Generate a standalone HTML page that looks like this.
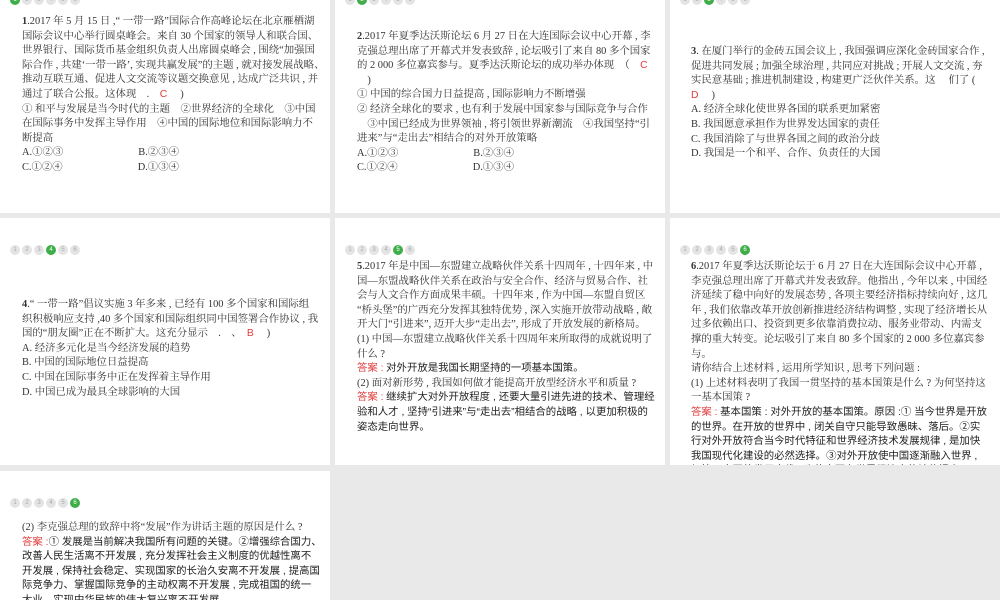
<!DOCTYPE html>
<html><head><meta charset="utf-8"><style>
*{margin:0;padding:0;box-sizing:border-box}
body{width:1000px;height:600px;background:#e9e9e9;position:relative;overflow:hidden;font-family:"Liberation Serif","Noto Serif CJK SC",serif;color:#333}
.p{position:absolute;background:#fff;overflow:hidden}
.t{position:absolute;font-size:10.4px;line-height:14.6px;white-space:nowrap;letter-spacing:0}
.dots{position:absolute;display:flex;gap:2px}
.dots span{width:10px;height:10px;border-radius:50%;background:#e4e4e4;color:#aaa;font:6px/10px "Liberation Sans",sans-serif;text-align:center}
.dots span.a{background:#3fae49;color:#fff}
.r{color:#e23b3b;font-family:"Liberation Sans","Noto Sans CJK SC",sans-serif}
.s{font-family:"Liberation Sans","Noto Sans CJK SC",sans-serif;color:#222}
b{font-weight:bold}
</style></head><body>

<div class="p" style="left:0;top:0;width:330px;height:213px">
<div class="dots" style="left:10px;top:-5px"><span class="a">1</span><span>2</span><span>3</span><span>4</span><span>5</span><span>6</span></div>
<div class="t" style="left:22px;top:15px"><b>1</b>.2017 年 5 月 15 日 ,“ 一带一路”国际合作高峰论坛在北京雁栖湖<br>国际会议中心举行圆桌峰会。来自 30 个国家的领导人和联合国、<br>世界银行、国际货币基金组织负责人出席圆桌峰会 , 围绕“加强国<br>际合作 , 共建‘一带一路’, 实现共赢发展”的主题 , 就对接发展战略、<br>推动互联互通、促进人文交流等议题交换意见 , 达成广泛共识 , 并<br>通过了联合公报。这体现　.　<span class="r">C</span>　 )<br>① 和平与发展是当今时代的主题　②世界经济的全球化　③中国<br>在国际事务中发挥主导作用　④中国的国际地位和国际影响力不<br>断提高<br>A.①②③<span style="display:inline-block;width:75px"></span>B.②③④<br>C.①②④<span style="display:inline-block;width:75px"></span>D.①③④</div>
</div>

<div class="p" style="left:335px;top:0;width:330px;height:213px">
<div class="dots" style="left:10px;top:-5px"><span>1</span><span class="a">2</span><span>3</span><span>4</span><span>5</span><span>6</span></div>
<div class="t" style="left:22px;top:30px"><b>2</b>.2017 年夏季达沃斯论坛 6 月 27 日在大连国际会议中心开幕 , 李<br>克强总理出席了开幕式并发表致辞 , 论坛吸引了来自 80 多个国家<br>的 2 000 多位嘉宾参与。夏季达沃斯论坛的成功举办体现　（　<span class="r">C</span><br>　)<br>① 中国的综合国力日益提高 , 国际影响力不断增强<br>② 经济全球化的要求 , 也有利于发展中国家参与国际竞争与合作<br>　③中国已经成为世界领袖 , 将引领世界新潮流　④我国坚持“引<br>进来”与“走出去”相结合的对外开放策略<br>A.①②③<span style="display:inline-block;width:75px"></span>B.②③④<br>C.①②④<span style="display:inline-block;width:75px"></span>D.①③④</div>
</div>

<div class="p" style="left:670px;top:0;width:330px;height:213px">
<div class="dots" style="left:10px;top:-5px"><span>1</span><span>2</span><span class="a">3</span><span>4</span><span>5</span><span>6</span></div>
<div class="t" style="left:21px;top:45px"><b>3</b>. 在厦门举行的金砖五国会议上 , 我国强调应深化金砖国家合作 ,<br>促进共同发展 ; 加强全球治理 , 共同应对挑战 ; 开展人文交流 , 夯<br>实民意基础 ; 推进机制建设 , 构建更广泛伙伴关系。这　 们了 (<br><span class="r">D</span>　 )<br>A. 经济全球化使世界各国的联系更加紧密<br>B. 我国愿意承担作为世界发达国家的责任<br>C. 我国消除了与世界各国之间的政治分歧<br>D. 我国是一个和平、合作、负责任的大国</div>
</div>

<div class="p" style="left:0;top:218px;width:330px;height:247px">
<div class="dots" style="left:10px;top:27px"><span>1</span><span>2</span><span>3</span><span class="a">4</span><span>5</span><span>6</span></div>
<div class="t" style="left:22px;top:80px"><b>4</b>.“ 一带一路”倡议实施 3 年多来 , 已经有 100 多个国家和国际组<br>织积极响应支持 ,40 多个国家和国际组织同中国签署合作协议 , 我<br>国的“朋友圈”正在不断扩大。这充分显示　.　、　<span class="r">B</span>　 )<br>A. 经济多元化是当今经济发展的趋势<br>B. 中国的国际地位日益提高<br>C. 中国在国际事务中正在发挥着主导作用<br>D. 中国已成为最具全球影响的大国</div>
</div>

<div class="p" style="left:335px;top:218px;width:330px;height:247px">
<div class="dots" style="left:10px;top:27px"><span>1</span><span>2</span><span>3</span><span>4</span><span class="a">5</span><span>6</span></div>
<div class="t" style="left:22px;top:42px"><b>5</b>.2017 年是中国—东盟建立战略伙伴关系十四周年 , 十四年来 , 中<br>国—东盟战略伙伴关系在政治与安全合作、经济与贸易合作、社<br>会与人文合作方面成果丰硕。十四年来 , 作为中国—东盟自贸区<br>“桥头堡”的广西充分发挥其独特优势 , 深入实施开放带动战略 , 敞<br>开大门“引进来”, 迈开大步“走出去”, 形成了开放发展的新格局。<br>(1) 中国—东盟建立战略伙伴关系十四周年来所取得的成就说明了<br>什么 ?<br><span class="r">答案 :</span> <span class="s">对外开放是我国长期坚持的一项基本国策。</span><br>(2) 面对新形势 , 我国如何做才能提高开放型经济水平和质量 ?<br><span class="r">答案 :</span> <span class="s">继续扩大对外开放程度 , 还要大量引进先进的技术、管理经<br>验和人才 , 坚持“引进来”与“走出去”相结合的战略 , 以更加积极的<br>姿态走向世界。</span></div>
</div>

<div class="p" style="left:670px;top:218px;width:330px;height:247px">
<div class="dots" style="left:10px;top:27px"><span>1</span><span>2</span><span>3</span><span>4</span><span>5</span><span class="a">6</span></div>
<div class="t" style="left:21px;top:42px"><b>6</b>.2017 年夏季达沃斯论坛于 6 月 27 日在大连国际会议中心开幕 ,<br>李克强总理出席了开幕式并发表致辞。他指出 , 今年以来 , 中国经<br>济延续了稳中向好的发展态势 , 各项主要经济指标持续向好 , 这几<br>年 , 我们依靠改革开放创新推进经济结构调整 , 实现了经济增长从<br>过多依赖出口、投资到更多依靠消费拉动、服务业带动、内需支<br>撑的重大转变。论坛吸引了来自 80 多个国家的 2 000 多位嘉宾参<br>与。<br>请你结合上述材料 , 运用所学知识 , 思考下列问题 :<br>(1) 上述材料表明了我国一贯坚持的基本国策是什么 ? 为何坚持这<br>一基本国策 ?<br><span class="r">答案 :</span> <span class="s">基本国策 : 对外开放的基本国策。原因 :① 当今世界是开放<br>的世界。在开放的世界中 , 闭关自守只能导致愚昧、落后。②实<br>行对外开放符合当今时代特征和世界经济技术发展规律 , 是加快<br>我国现代化建设的必然选择。③对外开放使中国逐渐融入世界 ,<br>加快了中国的发展步伐 , 也使中国在世界经济中的地位提高。</span></div>
</div>

<div class="p" style="left:0;top:471px;width:330px;height:129px">
<div class="dots" style="left:10px;top:27px"><span>1</span><span>2</span><span>3</span><span>4</span><span>5</span><span class="a">6</span></div>
<div class="t" style="left:22px;top:50px">(2) 李克强总理的致辞中将“发展”作为讲话主题的原因是什么 ?<br><span class="r">答案 :</span><span class="s">① 发展是当前解决我国所有问题的关键。②增强综合国力、<br>改善人民生活离不开发展 , 充分发挥社会主义制度的优越性离不<br>开发展 , 保持社会稳定、实现国家的长治久安离不开发展 , 提高国<br>际竞争力、掌握国际竞争的主动权离不开发展 , 完成祖国的统一<br>大业、实现中华民族的伟大复兴离不开发展。</span></div>
</div>

</body></html>
